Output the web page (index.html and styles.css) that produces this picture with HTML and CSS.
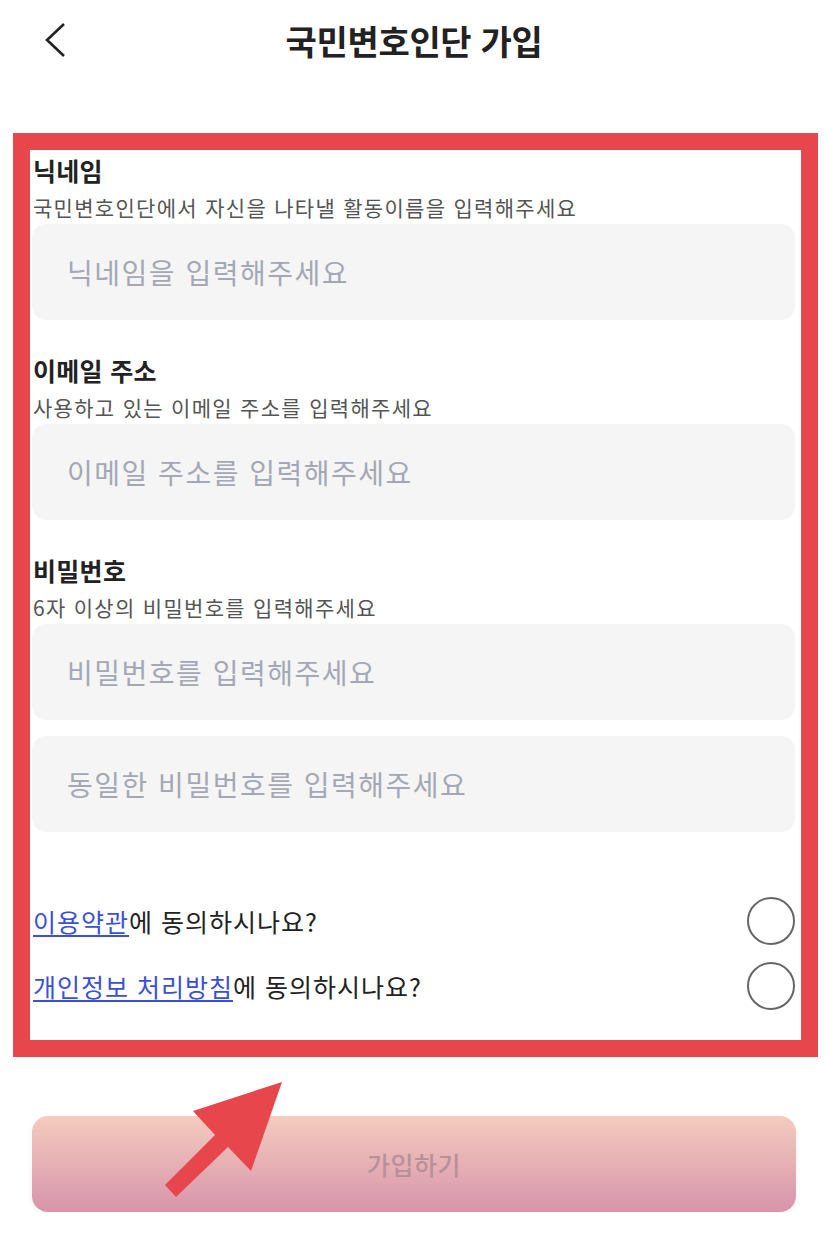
FILE: index.html
```html
<!DOCTYPE html>
<html lang="ko">
<head>
    <meta charset="UTF-8">
    <meta name="viewport" content="width=device-width, initial-scale=1.0">
    <title>국민변호인단 가입</title>
    <link rel="stylesheet" href="styles.css">
</head>
<body>
    <header class="top-bar">
        <button class="back-btn" aria-label="뒤로">
            <svg width="24" height="36" viewBox="0 0 24 36">
                <polyline points="20,2 3,18 20,34" fill="none" stroke="#222" stroke-width="2.6" stroke-linejoin="miter"/>
            </svg>
        </button>
        <h1 class="title">국민변호인단 가입</h1>
        <span></span>
    </header>

    <form class="join-form">
        <div class="field">
            <div class="field-label">닉네임</div>
            <div class="field-desc">국민변호인단에서 자신을 나타낼 활동이름을 입력해주세요</div>
            <input class="text-input" type="text" placeholder="닉네임을 입력해주세요">
        </div>

        <div class="field">
            <div class="field-label">이메일 주소</div>
            <div class="field-desc">사용하고 있는 이메일 주소를 입력해주세요</div>
            <input class="text-input" type="email" placeholder="이메일 주소를 입력해주세요">
        </div>

        <div class="field">
            <div class="field-label">비밀번호</div>
            <div class="field-desc">6자 이상의 비밀번호를 입력해주세요</div>
            <input class="text-input" type="password" placeholder="비밀번호를 입력해주세요">
            <input class="text-input second" type="password" placeholder="동일한 비밀번호를 입력해주세요">
        </div>

        <div class="agree-list">
            <label class="agree-row">
                <span><a href="#">이용약관</a>에 동의하시나요?</span>
                <span class="check"></span>
            </label>
            <label class="agree-row">
                <span><a href="#">개인정보 처리방침</a>에 동의하시나요?</span>
                <span class="check"></span>
            </label>
        </div>
    </form>

    <button class="submit-btn" type="button">가입하기</button>

    <!-- 가입 버튼을 가리키는 화살표 -->
    <svg class="pointer" width="130" height="125" viewBox="0 0 130 125">
        <polygon points="122,4 33,33 55,57 5,107 16,119 68,69 91,93" fill="#e8464d"/>
    </svg>
</body>
</html>
```

FILE: styles.css
```css
body {
    margin: 0;
    position: relative;
    font-family: "Noto Sans CJK KR", "Noto Sans", sans-serif;
    color: #222;
    background: #fff;
}

.top-bar {
    display: grid;
    grid-template-columns: 1fr auto 1fr;
    align-items: center;
    height: 80px;
}
.back-btn {
    justify-self: start;
    margin-left: 44px;
    padding: 0;
    border: none;
    background: none;
    display: flex;
}
.title {
    margin: 0;
    font-size: 34px;
    font-weight: 700;
    letter-spacing: -0.3px;
}

/* 빨간 테두리 영역 */
.join-form {
    margin: 53px 10px 0 13px;
    border: 17px solid #e8464d;
    padding: 0 6px 30px 2px;
}

.field {
    display: flex;
    flex-direction: column;
    margin-bottom: 30px;
}
.field-label {
    font-size: 25px;
    font-weight: 700;
    line-height: 40px;
    padding-left: 1px;
    letter-spacing: 0.3px;
}
.field-desc {
    font-size: 21px;
    line-height: 34px;
    color: #555;
    padding-left: 1px;
    letter-spacing: 1.3px;
}
.text-input {
    height: 96px;
    box-sizing: border-box;
    border: none;
    border-radius: 14px;
    background: #f5f5f5;
    padding: 0 35px;
    font-family: inherit;
    font-size: 28px;
    letter-spacing: 1.5px;
    color: #222;
    outline: none;
}
.text-input::placeholder {
    color: #a4a8b4;
}
.text-input.second {
    margin-top: 16px;
}

.agree-list {
    display: flex;
    flex-direction: column;
    gap: 17px;
    margin-top: 65px;
}
.agree-row {
    display: flex;
    justify-content: space-between;
    align-items: center;
    height: 48px;
    font-size: 25px;
    letter-spacing: 1px;
    padding-left: 1px;
}
.agree-row a {
    color: #3b50d8;
    text-decoration: underline;
    text-decoration-thickness: 2px;
    text-underline-offset: 3px;
}
.check {
    width: 48px;
    height: 48px;
    box-sizing: border-box;
    border: 2px solid #666;
    border-radius: 50%;
}

.submit-btn {
    display: block;
    margin: 59px 0 0 32px;
    width: 764px;
    height: 96px;
    border: none;
    border-radius: 16px;
    background: linear-gradient(to bottom, #f4ccbe, #d794ab);
    box-shadow: 0 3px 6px rgba(0, 0, 0, 0.06);
    font-family: inherit;
    font-size: 25px;
    font-weight: 500;
    letter-spacing: 0.5px;
    color: #b8909a;
}

.pointer {
    position: absolute;
    left: 160px;
    top: 1078px;
}
```
